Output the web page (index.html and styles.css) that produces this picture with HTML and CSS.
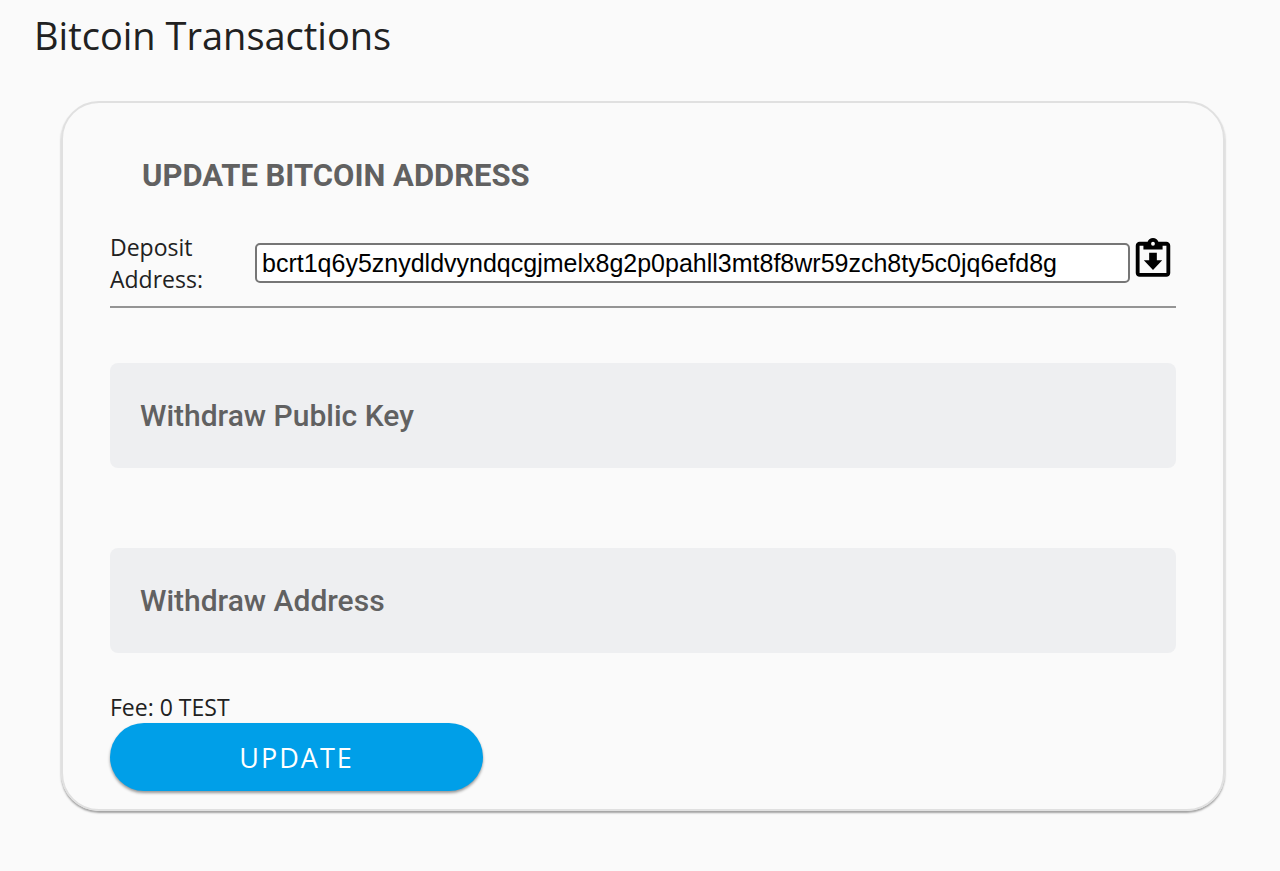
FILE: index.html
```html
<!DOCTYPE html>
<html lang="en">
  <head>
    <meta charset="UTF-8" />
    <meta name="viewport" content="width=device-width, initial-scale=1.0" />
    <title>Bitcoin Transactions</title>
    <link rel="stylesheet" href="styles.css">
  </head>
  <body>
    <h1 class="page-title">Bitcoin Transactions</h1>
    <form class="card">
      <h2 class="card-title">Update Bitcoin Address</h2>
      <div class="deposit">
        <label class="deposit-label" for="deposit">Deposit Address:</label>
        <input class="deposit-input" id="deposit" type="text" readonly value="bcrt1q6y5znydldvyndqcgjmelx8g2p0pahll3mt8f8wr59zch8ty5c0jq6efd8g" />
        <button class="copy-button" type="button" aria-label="Copy deposit address">
          <svg viewBox="0 0 24 24" width="46" height="46">
            <path d="M19 2h-4.180C14.400.84 13.300 0 12 0S9.600.84 9.180 2H5c-1.100 0-2 .9-2 2v14.200c0 1.100.9 2 2 2h14c1.100 0 2-.9 2-2V4c0-1.100-.9-2-2-2zm-7 0a1 1 0 1 1 0 2 1 1 0 0 1 0-2zM19 18.200H5V4h2v2h10V4h2z" fill-rule="evenodd" />
            <path d="M10 7.700h4v3.900h2.800L12 16.700l-4.800-5.100H10z" />
          </svg>
        </button>
      </div>
      <input class="field" type="text" aria-label="Withdraw Public Key" placeholder="Withdraw Public Key" />
      <input class="field" type="text" aria-label="Withdraw Address" placeholder="Withdraw Address" />
      <p class="fee">Fee: 0 TEST</p>
      <button class="update-button" type="button">UPDATE</button>
    </form>
  </body>
</html>
```
FILE: styles.css
```css
* {
  margin: 0;
  padding: 0;
  box-sizing: border-box;
}

body {
  background: #fafafa;
  color: #212121;
  font-family: "Open Sans", "Noto Sans", sans-serif;
  font-size: 23px;
  line-height: 32px;
}

.page-title {
  padding: 11px 34px 0;
  font-size: 38px;
  font-weight: 400;
  line-height: 48px;
}

.card {
  margin: 42px 55px 40px 61px;
  padding: 48px 47px 18px;
  border: 2px solid #e0e0e0;
  border-radius: 38px;
  box-shadow: 0 2px 2px rgba(0, 0, 0, 0.35);
}

.card-title {
  margin-bottom: 30px;
  padding: 9px 32px;
  color: #616161;
  font-family: Roboto, sans-serif;
  font-size: 31px;
  font-weight: 700;
  text-transform: uppercase;
}

/* Deposit address row */
.deposit {
  display: flex;
  align-items: center;
  padding-bottom: 11px;
  border-bottom: 2px solid #949494;
}

.deposit-label {
  width: 145px;
  padding-right: 40px;
}

.deposit-input {
  flex: 1;
  min-width: 0;
  height: 40px;
  padding: 0 5px;
  border: 2px solid #767676;
  border-radius: 5px;
  background: #fff;
  color: #000;
  font-family: "Liberation Sans", Arial, sans-serif;
  font-size: 25px;
}

.copy-button {
  width: 46px;
  height: 50px;
  padding-bottom: 4px;
  border: none;
  background: none;
  cursor: pointer;
}

.copy-button svg {
  display: block;
}

/* Withdraw fields */
.field {
  display: block;
  width: 100%;
  height: 105px;
  margin: 55px 0 80px;
  padding: 0 30px;
  border: none;
  border-radius: 8px;
  background: #eeeff1;
  color: #212121;
  font-family: Roboto, sans-serif;
  font-size: 30px;
  font-weight: 500;
}

.field + .field {
  margin: 0 0 38px;
}

.field::placeholder {
  color: #616161;
  opacity: 1;
}

.update-button {
  display: block;
  width: 35%;
  height: 68px;
  border: none;
  border-radius: 35px;
  background: #009fe8;
  box-shadow: 0 2px 3px rgba(0, 0, 0, 0.4);
  color: #fff;
  font-family: "Open Sans", "Noto Sans", sans-serif;
  font-size: 27px;
  letter-spacing: 2px;
  cursor: pointer;
}
```
